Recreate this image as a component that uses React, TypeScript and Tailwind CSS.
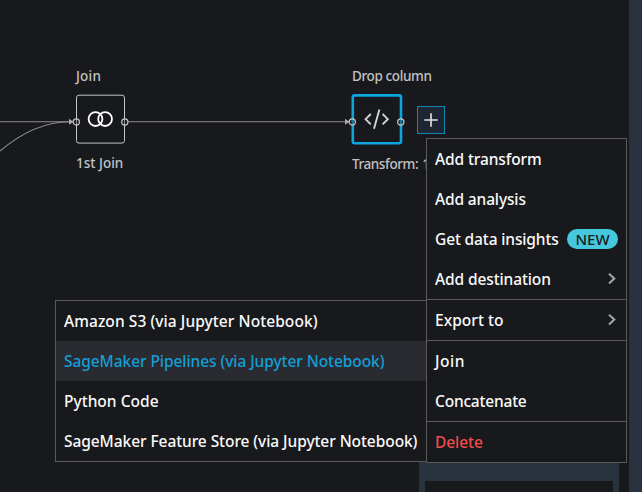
import React from 'react';

const Chevron = () => (
  <svg className="ml-auto mr-0.5 h-[12px] w-[8px]" viewBox="0 0 8 12" fill="none" stroke="#a6a8aa" strokeWidth="2">
    <path d="M1 .8 6.3 5.6 1 10.4" />
  </svg>
);

type ItemProps = { label: string; spacing?: string; tone?: string; children?: React.ReactNode };

function Item({ label, spacing = 'tracking-[-0.07px]', tone = 'text-[#fafafa]', children }: ItemProps) {
  return (
    <li className={`flex h-10 items-center whitespace-nowrap px-2 ${tone}`}>
      <span className={spacing}>{label}</span>
      {children}
    </li>
  );
}

const Divider = () => <li className="h-px bg-[#5a5a5b]" />;

function Edges() {
  return (
    <svg className="absolute inset-0" width="629" height="492" fill="none">
      <g stroke="#8b8c8e" strokeWidth="1.1">
        <path d="M0 121.7H70M128 121.7H347" />
        <path d="M0 151C20 134 43 121.7 70 121.7" />
      </g>
      <path d="M69 118.8 73.5 121.7 69 124.7ZM345 118.8 349.5 121.7 345 124.7Z" fill="#aaa" />
    </svg>
  );
}

const Ports = () => (
  <g stroke="#c8c9ca" strokeWidth="1.2" fill="#18191c" fillOpacity=".3">
    <circle cx="4.3" cy="31" r="3.1" />
    <circle cx="52.8" cy="31" r="3.1" />
  </g>
);

const JoinBox = () => (
  <svg className="-ml-1 h-[60px] w-[58px]" viewBox="0 0 58 60" fill="none">
    <rect x="4.5" y="4.2" width="48" height="47.9" rx="2.5" stroke="#c4c5c6" />
    <Ports />
    <g stroke="#fff" strokeWidth="1.8">
      <circle cx="23.5" cy="28.1" r="6.9" />
      <circle cx="33.1" cy="28.1" r="6.9" />
    </g>
  </svg>
);

const CodeBox = () => (
  <svg className="-ml-1 h-[60px] w-[58px]" viewBox="0 0 58 60" fill="none">
    <rect x="4.8" y="4.4" width="48.2" height="47.8" rx="2" stroke="#0ea5df" strokeWidth="2.6" />
    <Ports />
    <path d="M22.8 23 17.6 28.2 22.8 33.4M34.6 23 39.8 28.2 34.6 33.4M31.4 18.5 26 37.8" stroke="#d2d3d4" strokeWidth="1.9" />
  </svg>
);

export default function App() {
  return (
    <div className="relative flex h-[492px] w-[642px] overflow-hidden bg-[#18191c] font-['Noto_Sans',sans-serif] text-[15.5px] font-[550] leading-5">
      <main className="relative flex-1 text-[13.5px] font-medium leading-[18px] text-[#c2c3c5]">
        <Edges />
        <div className="absolute left-[76px] top-[67px] flex flex-col whitespace-nowrap">
          <span className="mb-[6px] tracking-[0.2px]">Join</span>
          <JoinBox />
          <span className="mt-[3px]">1st Join</span>
        </div>
        <div className="absolute left-[352px] top-[67px] flex flex-col whitespace-nowrap">
          <span className="mb-[6px] tracking-[-0.38px]">Drop column</span>
          <CodeBox />
          <span className="mt-1 tracking-[-0.42px]">Transform: <span className="ml-px">1</span></span>
        </div>
        <button className="absolute left-[417px] top-[106px] flex size-7 items-center justify-center border border-[#1385b5] bg-[#1d2733]">
          <svg className="size-[14px]" viewBox="0 0 14 14" stroke="#e6e7e8" strokeWidth="1.6">
            <path d="M7 .3V13.7M.3 7H13.7" />
          </svg>
        </button>
        <div className="absolute bottom-0 left-[419px] h-[30px] w-[200px] bg-[#29323f] px-[6px] pt-[19px]">
          <div className="h-full bg-[#18191c]" />
        </div>
      </main>
      <aside className="w-[13px] bg-[#29323f]" />

      <ul className="absolute left-[55px] top-[300px] w-[372px] border border-[#5a5a5b] bg-[#18191c]">
        <Item label="Amazon S3 (via Jupyter Notebook)" spacing="tracking-[0.07px]" />
        <div className="bg-[#2a2b30]">
          <Item label="SageMaker Pipelines (via Jupyter Notebook)" tone="text-[#129fd8]" />
        </div>
        <Item label="Python Code" spacing="tracking-[0.02px]" />
        <Item label="SageMaker Feature Store (via Jupyter Notebook)" />
      </ul>

      <ul className="absolute left-[426px] top-[138px] w-[201px] border border-[#5a5a5b] bg-[#18191c]">
        <Item label="Add transform" spacing="tracking-[-0.1px]" />
        <Item label="Add analysis" spacing="tracking-[-0.14px]" />
        <Item label="Get data insights" spacing="tracking-[-0.13px]">
          <span className="ml-auto flex h-5 w-[51px] items-center justify-center rounded-full bg-[#45c8dc] text-[15px] font-medium text-[#18191c]">NEW</span>
        </Item>
        <Item label="Add destination" spacing="tracking-[-0.11px]"><Chevron /></Item>
        <Divider />
        <Item label="Export to" spacing="tracking-[0.05px]"><Chevron /></Item>
        <Divider />
        <Item label="Join" spacing="tracking-[0.5px]" />
        <Item label="Concatenate" spacing="tracking-[-0.2px]" />
        <Divider />
        <Item label="Delete" tone="text-[#f04c4c]" />
      </ul>
    </div>
  );
}
